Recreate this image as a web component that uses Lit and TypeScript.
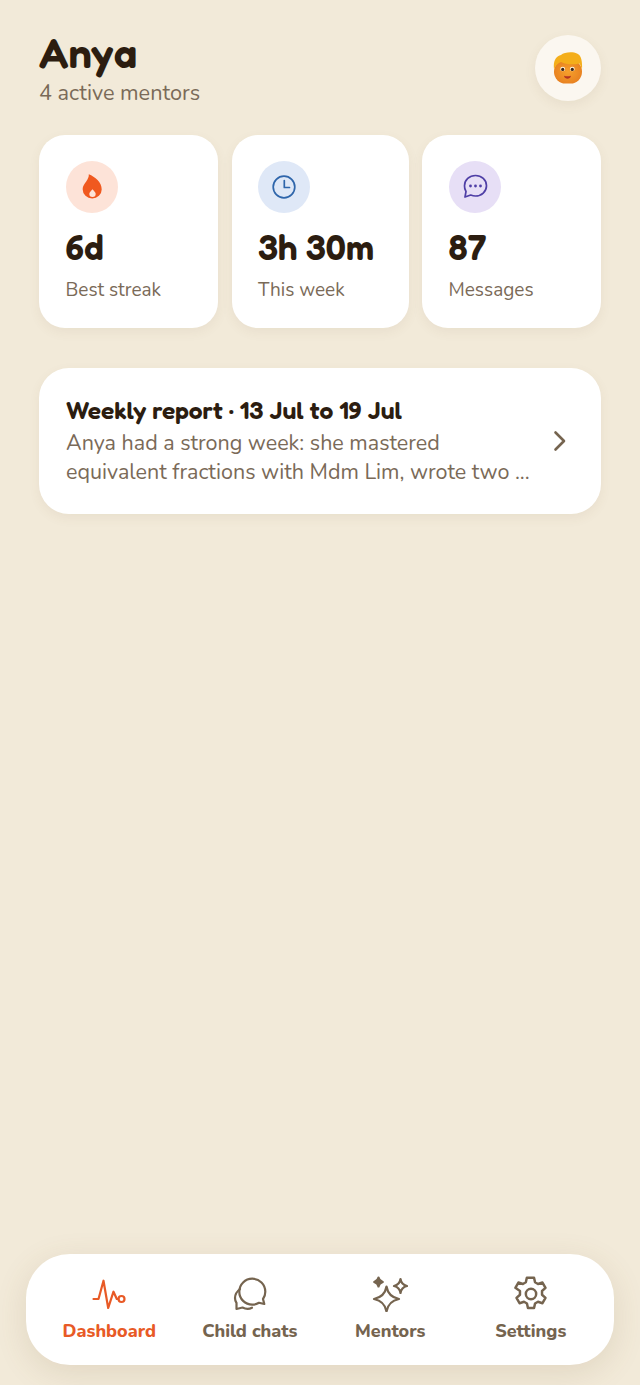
import { LitElement, html, css, svg } from "lit";
import { customElement } from "lit/decorators.js";

const stats = [
  { tone: "fire", value: "6d", label: "Best streak", size: 26, icon: svg`<path fill="#f0591f" d="M9.800 .3C16 3 22.700 8 22.700 15.500A9.500 9 0 0 1 3.700 15.500C3.700 11.500 6 9.500 7.500 7 8.800 5 10 3 9.800 .3Z"/><path fill="#fde3d8" d="M13.500 15.300C15 17 16.700 18.500 16.700 19.700a3.200 3.200 0 0 1-6.400 0C10.300 18.500 12 17 13.500 15.300Z"/>` },
  { tone: "time", value: "3h 30m", label: "This week", size: 24, icon: svg`<g fill="none" stroke="#2f66ab" stroke-width="1.700" stroke-linecap="round" stroke-linejoin="round"><circle cx="12" cy="12" r="10.800"/><path d="M12.300 5.500V12.500H17.500"/></g>` },
  { tone: "msg", value: "87", label: "Messages", size: 26, icon: svg`<path fill="none" stroke="#4f3fa6" stroke-width="1.700" stroke-linejoin="round" d="M13.500 1.500c6 0 11 4.500 11 10.300s-5 10.200-11 10.200c-1.700 0-3.300-.4-4.800-1l-5.700 2 1-5.500A10 10 0 0 1 2.500 11.800C2.500 6 7.500 1.500 13.500 1.500Z"/><g fill="#4f3fa6"><circle cx="8.500" cy="12" r="1.400"/><circle cx="13.500" cy="12" r="1.400"/><circle cx="18.500" cy="12" r="1.400"/></g>` },
];

const nav = [
  { label: "Dashboard", active: true, icon: svg`<path d="M2.500 23H7.500L12.500 4.700 17.200 32 22.500 15.700 25.800 23H27.500"/><circle cx="30.500" cy="23" r="3"/>` },
  { label: "Child chats", icon: svg`<path d="M20.300 2.700A13 13 0 1 0 20.300 28.700C23 28.700 25 28 27 26.800L32.300 28 31 23C32.500 21 33.300 18.500 33.300 15.700A13 13 0 0 0 20.300 2.700Z"/><path d="M8 13C4.800 15.500 3 18.500 3 22 3 24.500 3.800 26 4.500 27L4.500 33 10.500 31.500C13.500 33 17.500 33 20 31.700"/>` },
  { label: "Mentors", icon: svg`<path d="M14.500 10.500C15.700 17.500 19.500 21.500 27 23 19.500 24.500 15.700 28.500 14.500 35.500 13.300 28.500 9.500 24.500 2 23 9.500 21.500 13.300 17.500 14.500 10.500Z"/><path d="M28.500 3C29 6.500 31 9 35 10 31 11 29 13.500 28.500 17 28 13.500 26 11 22 10 26 9 28 6.500 28.500 3Z"/><path d="M6.500 1.500C6.800 3.800 8.200 5.200 10.800 6 8.200 6.800 6.800 8.200 6.500 10.500 6.200 8.200 4.800 6.800 2.200 6 4.800 5.200 6.200 3.800 6.500 1.500Z" fill="currentColor"/>` },
  { label: "Settings", icon: svg`<g transform="scale(1.125)"><path d="M13.300 1.500h5.400l.9 4.100 2.600 1.500 4-1.300 2.700 4.700-3.100 2.800v3.400l3.100 2.800-2.700 4.700-4-1.300-2.600 1.500-.9 4.100h-5.400l-.9-4.100-2.600-1.500-4 1.300-2.700-4.700 3.100-2.800v-3.400L2.100 10.500l2.700-4.700 4 1.300 2.600-1.500.9-4.100Z"/><circle cx="16" cy="16" r="4.600"/></g>` },
];

@customElement("app-root")
export class AppRoot extends LitElement {
  static styles = css`
    :host {
      display: flex;
      flex-direction: column;
      min-height: 1385px;
      box-sizing: border-box;
      padding: 27px 26px 20px;
      background: #f2ead9;
      font-family: "Nunito", "Lato", "Noto Sans", sans-serif;
      color: #2c1d10;
    }
    .content { padding: 0 13px; display: flex; flex-direction: column; }
    .head { display: flex; justify-content: space-between; align-items: flex-start; height: 108px; }
    .title {
      font-family: "Fredoka", "Inter", "Liberation Sans", sans-serif;
      font-weight: 650; font-size: 41.500px; line-height: 52px;
    }
    .sub { font-size: 21.700px; line-height: 24px; color: #7a6a58; margin-top: 2px; }
    .avatar {
      width: 66px; height: 66px; border-radius: 50%; background: #fbf7f0; margin-top: 8px;
      display: flex; align-items: center; justify-content: center;
      box-shadow: 0 4px 12px rgba(120, 90, 50, 0.08);
    }
    .stats { display: grid; grid-template-columns: 179fr 177fr 179fr; column-gap: 13.500px; }
    .stat {
      height: 193px; box-sizing: border-box; padding: 26px 26px 0 26.500px; background: #fff; border-radius: 26px;
      box-shadow: 0 4px 12px rgba(120, 90, 50, 0.07);
    }
    .badge { width: 52px; height: 52px; border-radius: 50%; display: flex; align-items: center; justify-content: center; }
    .fire { background: #fde3d8; }
    .time { background: #dfe8f7; }
    .msg { background: #e7dff6; }
    .value {
      font-family: "Fredoka", "Inter", "Liberation Sans", sans-serif;
      font-weight: 650; font-size: 35px; line-height: 40px; margin-top: 14px; white-space: nowrap;
    }
    .label { font-size: 19px; line-height: 24px; color: #7a6a58; margin-top: 11px; white-space: nowrap; }
    .report {
      margin-top: 40px; height: 146px; box-sizing: border-box; padding: 0 34px 0 27px; background: #fff;
      border-radius: 30px; display: flex; align-items: center; gap: 15px;
      box-shadow: 0 4px 12px rgba(120, 90, 50, 0.07);
    }
    .report-text { flex: 1; min-width: 0; }
    .report-title {
      font-family: "Fredoka", "Inter", "Liberation Sans", sans-serif;
      font-weight: 650; font-size: 24.600px; line-height: 30px; white-space: nowrap; margin-top: -1px;
    }
    .report-body { font-size: 21.500px; line-height: 29px; color: #7a6a58; white-space: nowrap; margin-top: 4px; }
    .chev { flex: none; display: block; }
    .nav {
      margin-top: auto; height: 111px; box-sizing: border-box; background: #fff; border-radius: 44px;
      display: grid; grid-template-columns: 1fr 1fr 1fr 1fr; padding: 0 13px;
      box-shadow: 0 8px 32px rgba(120, 90, 50, 0.14);
    }
    .item { display: flex; flex-direction: column; align-items: center; padding-top: 22px; color: #75644f; }
    .item svg { display: block; fill: none; stroke: currentColor; stroke-width: 2.200; stroke-linecap: round; stroke-linejoin: round; }
    .item span { font-size: 18px; line-height: 24px; font-weight: 800; margin-top: 7px; white-space: nowrap; }
    .active { color: #e85a26; }
  `;

  render() {
    return html`
      <div class="content">
        <div class="head">
          <div>
            <div class="title">Anya</div>
            <div class="sub">4 active mentors</div>
          </div>
          <div class="avatar">
            <svg width="30" height="32" viewBox="0 0 30 32" role="img" aria-label="child">
              <defs><radialGradient id="f" cx="50%" cy="50%" r="60%"><stop offset="0" stop-color="#f6a02c"/><stop offset="1" stop-color="#e67d1f"/></radialGradient></defs>
              <rect x="1" y="8" width="28" height="23.500" rx="11.500" fill="url(#f)"/>
              <path fill="#f4ae1a" d="M1 17C0 9 3 4 8 3 11 0 20-.5 24 1.500 28 3 29.500 9 29 17 28 15 27.500 13 26.500 11.500 21 13 12 12.500 8 10 5 11 3 13 1 17Z"/>
              <ellipse cx="9.700" cy="17" rx="2.400" ry="2.300" fill="#fff3dc"/><ellipse cx="19.300" cy="17" rx="2.400" ry="2.300" fill="#fff3dc"/>
              <circle cx="9.700" cy="17.400" r="1.600" fill="#3a2417"/><circle cx="19.300" cy="17.400" r="1.600" fill="#3a2417"/>
              <path fill="#b5331f" d="M11 23.800c2.300.7 4.700.7 7 0-.4 2.200-2 3-3.500 3s-3.100-.8-3.500-3Z"/>
            </svg>
          </div>
        </div>
        <div class="stats">
          ${stats.map((s) => html`
            <div class="stat">
              <div class="badge ${s.tone}"><svg width=${s.size} height=${s.size} viewBox="0 0 ${s.size} ${s.size}">${s.icon}</svg></div>
              <div class="value">${s.value}</div>
              <div class="label">${s.label}</div>
            </div>`)}
        </div>
        <div class="report">
          <div class="report-text">
            <div class="report-title">Weekly report · 13 Jul to 19 Jul</div>
            <div class="report-body">Anya had a strong week: she mastered<br>equivalent fractions with Mdm Lim, wrote two ...</div>
          </div>
          <svg class="chev" width="14" height="22" viewBox="0 0 14 22"><path d="M2.500 2.500 11 11l-8.500 8.500" fill="none" stroke="#75644f" stroke-width="2.600" stroke-linecap="round" stroke-linejoin="round"/></svg>
        </div>
      </div>
      <div class="nav">
        ${nav.map((n) => html`
          <div class="item ${n.active ? "active" : ""}">
            <svg width="36" height="36" viewBox="0 0 36 36">${n.icon}</svg>
            <span>${n.label}</span>
          </div>`)}
      </div>
    `;
  }
}
